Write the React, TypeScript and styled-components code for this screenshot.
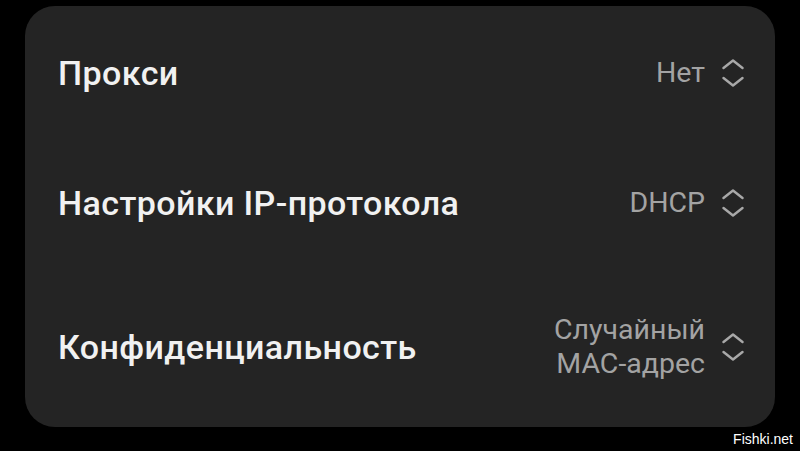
import React from 'react';
import styled, { createGlobalStyle } from 'styled-components';

const GlobalStyle = createGlobalStyle`
  html, body {
    margin: 0;
    padding: 0;
    background: #000;
  }
  body {
    width: 800px;
    height: 451px;
    overflow: hidden;
    font-family: Roboto, "Noto Sans", sans-serif;
  }
`;

const Screen = styled.div`
  width: 800px;
  height: 451px;
  box-sizing: border-box;
  padding: 6px 25px 0 25px;
  display: flex;
  flex-direction: column;
`;

const Card = styled.div`
  background: #242424;
  border-radius: 30px;
  padding-top: 2px;
  display: flex;
  flex-direction: column;
  height: 421px;
  box-sizing: border-box;
`;

const Row = styled.div`
  display: flex;
  align-items: center;
  justify-content: space-between;
  padding: 45px 31px 45px 33px;
`;

const Title = styled.div`
  color: #f1f1f1;
  font-size: 34px;
  font-weight: 500;
  line-height: 40px;
  letter-spacing: 0.4px;
`;

const Value = styled.div`
  display: flex;
  align-items: center;
  gap: 17px;
`;

const ValueText = styled.div`
  color: #a3a3a3;
  font-size: 28.5px;
  font-weight: 400;
  line-height: 34px;
  text-align: right;
`;

const Footer = styled.div`
  display: flex;
  justify-content: flex-end;
  margin-right: -18px;
  padding-top: 2px;
`;

const Mark = styled.span`
  color: #fff;
  font-family: "Liberation Sans", Arial, sans-serif;
  font-size: 14px;
  line-height: 20px;
`;

const Spinner = () => (
  <svg width="22" height="28" viewBox="0 0 22 28" fill="none">
    <polyline points="1.5,9 11,1.5 20.5,9" stroke="#a8a8a8" strokeWidth="2.4" strokeLinecap="round" strokeLinejoin="round" />
    <polyline points="1.5,19 11,26.5 20.5,19" stroke="#a8a8a8" strokeWidth="2.4" strokeLinecap="round" strokeLinejoin="round" />
  </svg>
);

const settings: { title: string; value: string[] }[] = [
  { title: 'Прокси', value: ['Нет'] },
  { title: 'Настройки IP-протокола', value: ['DHCP'] },
  { title: 'Конфиденциальность', value: ['Случайный', 'MAC-адрес'] },
];

export default function App() {
  return (
    <>
      <GlobalStyle />
      <Screen>
        <Card>
          {settings.map((s) => (
            <Row key={s.title}>
              <Title>{s.title}</Title>
              <Value>
                <ValueText>
                  {s.value.map((line) => (
                    <div key={line}>{line}</div>
                  ))}
                </ValueText>
                <Spinner />
              </Value>
            </Row>
          ))}
        </Card>
        <Footer>
          <Mark>Fishki.net</Mark>
        </Footer>
      </Screen>
    </>
  );
}
